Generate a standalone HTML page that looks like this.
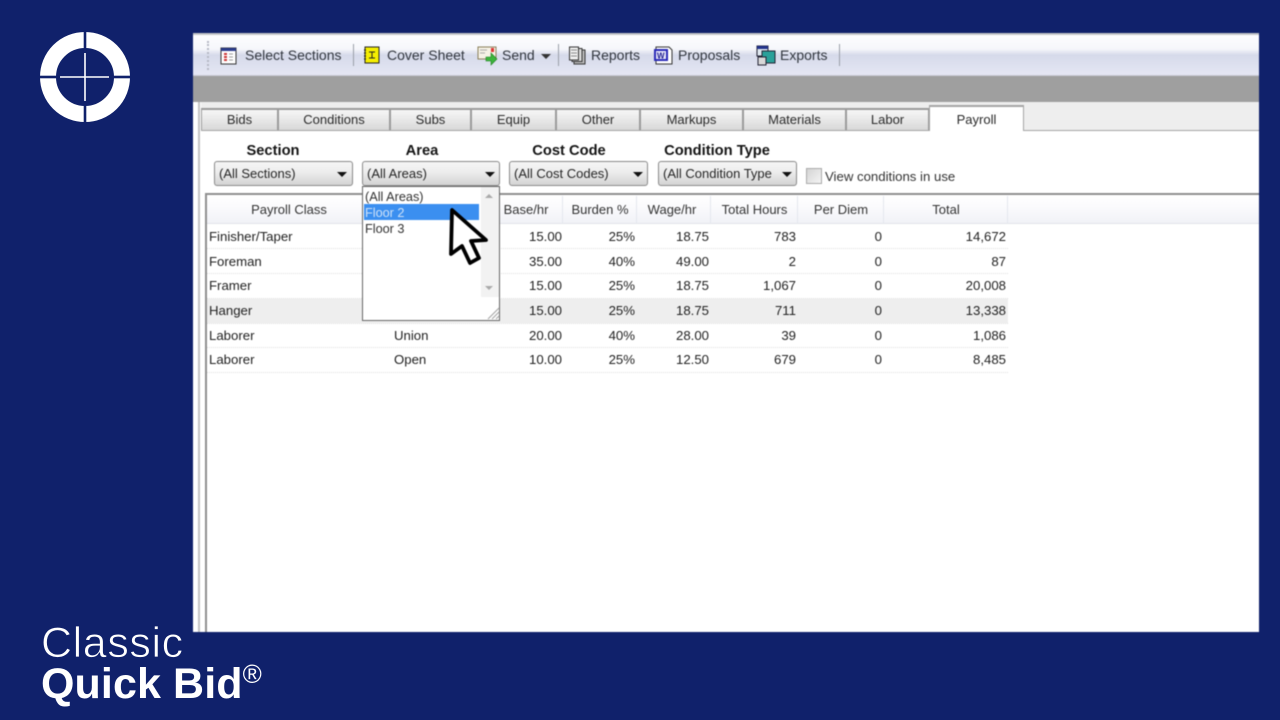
<!DOCTYPE html>
<html><head><meta charset="utf-8"><style>
html,body{margin:0;padding:0;width:1280px;height:720px;overflow:hidden;background:#10216b}
*{box-sizing:border-box}
#app{position:absolute;left:193px;top:33px;width:1066px;height:599px;background:#fff;overflow:hidden;filter:blur(.4px)}
#app div,#app span{position:absolute}
.t{font:14px "Liberation Sans",sans-serif;color:#30353d;white-space:nowrap;line-height:16px}
.g{font:13.2px "Liberation Sans",sans-serif;color:#333;white-space:nowrap;line-height:16px}
.h{font:bold 14.7px "Liberation Sans",sans-serif;color:#151515;white-space:nowrap;line-height:16px;text-align:center}
.tab{top:75px;height:22px;background:linear-gradient(#f7f7f7,#e6e6e6 55%,#d8d8d8);border:1px solid #9b9b9b;border-bottom:none;border-width:2px 1px 0 1px;font:13px/20px "Liberation Sans",sans-serif;color:#2a2a2a;text-align:center}
.cb{top:128px;height:25px;border:1px solid #8a8a8a;border-radius:3px;background:linear-gradient(#f6f6f6,#ececec 45%,#d4d4d4);font:13px/23px "Liberation Sans",sans-serif;color:#262626;padding-left:4px;white-space:nowrap}
.ar{width:0;height:0;border-left:5px solid transparent;border-right:5px solid transparent;border-top:5px solid #111}
.sep{top:11px;width:1px;height:22px;background:#9a9fa8}
.hd{top:164px;height:27px;font:13px/26px "Liberation Sans",sans-serif;color:#333;text-align:center}
.hl{top:163px;width:1px;height:27px;background:#e4e7ee}
.row{left:14px;width:801px;height:1px;border-top:1px dotted #dedede}
.c{font:13.2px/16px "Liberation Sans",sans-serif;color:#222;white-space:nowrap}
.r{text-align:right}
</style></head><body>

<svg style="position:absolute;left:40px;top:32px" width="90" height="90" viewBox="0 0 90 90">
<circle cx="45" cy="45" r="37" fill="none" stroke="#fff" stroke-width="16"/>
<rect x="43.700" y="0" width="2.600" height="26" fill="#10216b"/><rect x="43.700" y="64" width="2.600" height="26" fill="#10216b"/>
<rect x="0" y="43.700" width="26" height="2.600" fill="#10216b"/><rect x="64" y="43.700" width="26" height="2.600" fill="#10216b"/>
<path d="M45 21V69M20 45H69" stroke="#fff" stroke-width="1.600" fill="none"/>
</svg>

<div id="app">
 <!-- toolbar -->
 <div style="left:0;top:0;width:1066px;height:2px;background:#c4c6c8"></div>
 <div style="left:0;top:2px;width:1066px;height:41px;background:linear-gradient(#fdfdff,#f6f7fb 35%,#d6daea 50%,#dfe2f0 80%,#e6e7f4);border-bottom:1px solid #c8cad4"></div>
 <div style="left:14px;top:8px;width:3px;height:29px;border-left:2px dotted #b5b8c4"></div>

 <svg style="position:absolute;left:27px;top:13px" width="19" height="20" viewBox="0 0 19 20"><rect x="1" y="2" width="15" height="16" fill="#fff" stroke="#333"/><rect x="1" y="2" width="15" height="3" fill="#2b3c8c"/><path d="M4 8h3M4 11h3M4 14h3" stroke="#c33" stroke-width="2"/><path d="M9 8h4M9 11h4M9 14h4" stroke="#999"/></svg>
 <span class="t" style="left:52px;top:14px">Select Sections</span>
 <div class="sep" style="left:160px"></div>

 <svg style="position:absolute;left:169px;top:12px" width="19" height="20" viewBox="0 0 19 20"><rect x="3" y="2" width="14" height="16" fill="#f5ee00" stroke="#222"/><path d="M2 5h2M2 8h2M2 11h2M2 14h2" stroke="#222"/><path d="M7 7h6M10 7v6M7 13h6" stroke="#222"/></svg>
 <span class="t" style="left:194px;top:14px">Cover Sheet</span>

 <svg style="position:absolute;left:284px;top:12px" width="22" height="22" viewBox="0 0 22 22"><rect x="1" y="2" width="18" height="12" fill="#f6f2e6" stroke="#8a7f5a"/><rect x="14" y="3" width="3" height="4" fill="#d33"/><path d="M3 5h7M3 8h5" stroke="#aaa"/><path d="M9 12h5V8l6 6-6 6v-4H9z" fill="#3cb53c" stroke="#1f7f1f" stroke-width=".6"/></svg>
 <span class="t" style="left:309px;top:14px">Send</span>
 <div class="ar" style="left:348px;top:21px;border-top-color:#333"></div>
 <div class="sep" style="left:365px"></div>

 <svg style="position:absolute;left:375px;top:13px" width="19" height="19" viewBox="0 0 19 19"><rect x="6" y="4" width="11" height="14" fill="#bbb" stroke="#333"/><rect x="4" y="2.500" width="10" height="13" fill="#ddd" stroke="#333"/><rect x="1.500" y="1" width="9" height="13" fill="#f0f0f0" stroke="#333"/><path d="M3 4h6M3 7h6M3 10h6" stroke="#888"/></svg>
 <span class="t" style="left:398px;top:14px">Reports</span>

 <svg style="position:absolute;left:460px;top:13px" width="21" height="20" viewBox="0 0 21 20"><path d="M3 1h13l3 3v14H3z" fill="#fff" stroke="#333"/><rect x="1" y="3" width="14" height="12" fill="#2a2ab8"/><rect x="3" y="5" width="10" height="8" fill="#e8e8f8"/><text x="4" y="12.500" font-size="8" font-weight="bold" fill="#1b1b90" font-family="Liberation Sans">W</text></svg>
 <span class="t" style="left:485px;top:14px">Proposals</span>

 <svg style="position:absolute;left:563px;top:12px" width="20" height="22" viewBox="0 0 20 22"><rect x="1" y="1" width="11" height="10" fill="#dfe8f0" stroke="#223"/><rect x="1" y="1" width="11" height="3" fill="#22338c"/><rect x="6" y="6" width="13" height="12" fill="#2aa19a" stroke="#223"/><rect x="2" y="12" width="8" height="8" fill="#d8d8d8" stroke="#223"/></svg>
 <span class="t" style="left:587px;top:14px">Exports</span>
 <div class="sep" style="left:646px"></div>

 <!-- gray band -->
 <div style="left:0;top:43px;width:1066px;height:26px;background:#9f9f9f"></div>
 <div style="left:8px;top:69px;width:1058px;height:28px;background:#eeeeee"></div>
 <div style="left:8px;top:97px;width:1058px;height:1px;background:#a5a5a5"></div>

 <!-- left stripes -->
 <div style="left:5px;top:69px;width:2px;height:530px;background:#c4c4c4"></div>

 <!-- tabs -->
 <div class="tab" style="left:8px;width:77px">Bids</div>
 <div class="tab" style="left:85px;width:112px">Conditions</div>
 <div class="tab" style="left:197px;width:81px">Subs</div>
 <div class="tab" style="left:278px;width:85px">Equip</div>
 <div class="tab" style="left:363px;width:84px">Other</div>
 <div class="tab" style="left:447px;width:103px">Markups</div>
 <div class="tab" style="left:550px;width:103px">Materials</div>
 <div class="tab" style="left:653px;width:83px">Labor</div>
 <div class="tab" style="left:736px;top:72px;width:95px;height:26px;background:#fff;border-color:#a5a5a5;line-height:25px">Payroll</div>

 <!-- filter labels -->
 <div class="h" style="left:21px;top:110px;width:118px">Section</div>
 <div class="h" style="left:169px;top:110px;width:120px">Area</div>
 <div class="h" style="left:316px;top:110px;width:120px">Cost Code</div>
 <div class="h" style="left:464px;top:110px;width:120px">Condition Type</div>

 <div class="cb" style="left:21px;width:139px">(All Sections)<div class="ar" style="left:122px;top:10px"></div></div>
 <div class="cb" style="left:169px;width:138px">(All Areas)<div class="ar" style="left:122px;top:10px"></div></div>
 <div class="cb" style="left:316px;width:139px">(All Cost Codes)<div class="ar" style="left:123px;top:10px"></div></div>
 <div class="cb" style="left:465px;width:139px">(All Condition Type<div class="ar" style="left:123px;top:10px"></div></div>
 <div style="left:613px;top:135px;width:16px;height:16px;border:1px solid #aaa;background:linear-gradient(135deg,#d4d4d4,#f4f4f4)"></div>
 <span class="g" style="left:632px;top:136px">View conditions in use</span>

 <!-- grid -->
 <div style="left:12px;top:160px;width:1054px;height:2px;background:#8f8f8f"></div>
 <div style="left:12px;top:160px;width:2px;height:439px;background:#8f8f8f"></div>
 <div style="left:14px;top:162px;width:1052px;height:28px;background:linear-gradient(#fff,#fbfbfd 40%,#f1f2f7)"></div>
 <div style="left:14px;top:190px;width:1052px;height:1px;background:#e2e4ea"></div>
 <div class="hd" style="left:14px;width:164px">Payroll Class</div>
 <div class="hd" style="left:298px;width:70px">Base/hr</div>
 <div class="hd" style="left:370px;width:74px">Burden %</div>
 <div class="hd" style="left:442px;width:74px">Wage/hr</div>
 <div class="hd" style="left:518px;width:87px">Total Hours</div>
 <div class="hd" style="left:605px;width:86px">Per Diem</div>
 <div class="hd" style="left:691px;width:124px">Total</div>
 <div class="hl" style="left:369px"></div><div class="hl" style="left:443px"></div><div class="hl" style="left:517px"></div><div class="hl" style="left:604px"></div><div class="hl" style="left:690px"></div><div class="hl" style="left:814px"></div>

 <div style="left:14px;top:266px;width:801px;height:24px;background:#eeeeee"></div>
 <div class="row" style="top:215px"></div><div class="row" style="top:240px"></div><div class="row" style="top:265px"></div><div class="row" style="top:290px"></div><div class="row" style="top:314px"></div><div class="row" style="top:339px"></div>

 <!-- rows -->
 <span class="c" style="left:16px;top:196px">Finisher/Taper</span>
 <span class="c" style="left:16px;top:221px">Foreman</span>
 <span class="c" style="left:16px;top:245px">Framer</span>
 <span class="c" style="left:16px;top:270px">Hanger</span>
 <span class="c" style="left:16px;top:295px">Laborer</span>
 <span class="c" style="left:16px;top:319px">Laborer</span>
 <span class="c" style="left:201px;top:295px">Union</span>
 <span class="c" style="left:201px;top:319px">Open</span>

 <span class="c r" style="right:697px;top:196px">15.00</span><span class="c r" style="right:624px;top:196px">25%</span><span class="c r" style="right:550px;top:196px">18.75</span><span class="c r" style="right:463px;top:196px">783</span><span class="c r" style="right:377px;top:196px">0</span><span class="c r" style="right:253px;top:196px">14,672</span>
 <span class="c r" style="right:697px;top:221px">35.00</span><span class="c r" style="right:624px;top:221px">40%</span><span class="c r" style="right:550px;top:221px">49.00</span><span class="c r" style="right:463px;top:221px">2</span><span class="c r" style="right:377px;top:221px">0</span><span class="c r" style="right:253px;top:221px">87</span>
 <span class="c r" style="right:697px;top:245px">15.00</span><span class="c r" style="right:624px;top:245px">25%</span><span class="c r" style="right:550px;top:245px">18.75</span><span class="c r" style="right:463px;top:245px">1,067</span><span class="c r" style="right:377px;top:245px">0</span><span class="c r" style="right:253px;top:245px">20,008</span>
 <span class="c r" style="right:697px;top:270px">15.00</span><span class="c r" style="right:624px;top:270px">25%</span><span class="c r" style="right:550px;top:270px">18.75</span><span class="c r" style="right:463px;top:270px">711</span><span class="c r" style="right:377px;top:270px">0</span><span class="c r" style="right:253px;top:270px">13,338</span>
 <span class="c r" style="right:697px;top:295px">20.00</span><span class="c r" style="right:624px;top:295px">40%</span><span class="c r" style="right:550px;top:295px">28.00</span><span class="c r" style="right:463px;top:295px">39</span><span class="c r" style="right:377px;top:295px">0</span><span class="c r" style="right:253px;top:295px">1,086</span>
 <span class="c r" style="right:697px;top:319px">10.00</span><span class="c r" style="right:624px;top:319px">25%</span><span class="c r" style="right:550px;top:319px">12.50</span><span class="c r" style="right:463px;top:319px">679</span><span class="c r" style="right:377px;top:319px">0</span><span class="c r" style="right:253px;top:319px">8,485</span>

 <!-- dropdown -->
 <div style="left:169px;top:153px;width:138px;height:135px;background:#fff;border:1px solid #666"></div>
 <div style="left:288px;top:154px;width:18px;height:110px;background:#f2f2f2"></div>
 <div style="left:292px;top:161px;width:0;height:0;border-left:4px solid transparent;border-right:4px solid transparent;border-bottom:4px solid #aaa"></div>
 <div style="left:292px;top:253px;width:0;height:0;border-left:4px solid transparent;border-right:4px solid transparent;border-top:4px solid #aaa"></div>
 <div style="left:171px;top:171px;width:115px;height:16px;background:#3b8ff0"></div>
 <span class="c" style="left:172px;top:156px;color:#333;font-size:12.7px">(All Areas)</span>
 <span class="c" style="left:172px;top:172px;color:#cfe2f8;font-size:12.7px">Floor 2</span>
 <span class="c" style="left:172px;top:188px;color:#333;font-size:12.7px">Floor 3</span>
 <svg style="position:absolute;left:293px;top:273px" width="14" height="14" viewBox="0 0 14 14"><path d="M13 2L2 13M13 6L6 13M13 10L10 13" stroke="#aaa" stroke-width="1.200"/></svg>

 <!-- cursor -->
 <svg style="position:absolute;left:252px;top:171px" width="46" height="62" viewBox="0 0 46 62"><path d="M7 6L6 50 17 42 25 59 34 54 26 37 41 36Z" fill="#fff" stroke="#000" stroke-width="3.800" stroke-linejoin="round"/></svg>
</div>

<div style="position:absolute;left:41px;top:621px;font:43px/44px 'Liberation Sans',sans-serif;color:#fff;letter-spacing:.6px;-webkit-text-stroke:.8px #10216b">Classic</div>
<div style="position:absolute;left:41px;top:661px;font:bold 43px/46px 'Liberation Sans',sans-serif;color:#fff;white-space:nowrap;letter-spacing:.1px">Quick Bid<span style="font-size:26px;font-weight:normal;position:relative;top:-15px">®</span></div>

</body></html>
